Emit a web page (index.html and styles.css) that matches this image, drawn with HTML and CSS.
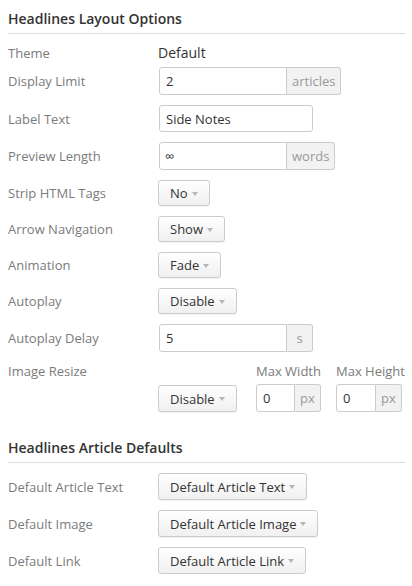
FILE: index.html
```html
<!DOCTYPE html>
<html>
<head>
<meta charset="utf-8">
<link rel="stylesheet" href="styles.css">
</head>
<body>
<div class="page">
  <h2 class="section-title">Headlines Layout Options</h2>
  <div class="form">
    <div class="row row-text">
      <div class="label">Theme</div>
      <div class="value">Default</div>
    </div>
    <div class="row">
      <div class="label">Display Limit</div>
      <div class="input-group"><span class="field w128">2</span><span class="addon">articles</span></div>
    </div>
    <div class="row">
      <div class="label">Label Text</div>
      <div class="field single w154">Side Notes</div>
    </div>
    <div class="row">
      <div class="label">Preview Length</div>
      <div class="input-group"><span class="field w128 inf">∞</span><span class="addon">words</span></div>
    </div>
    <div class="row">
      <div class="label">Strip HTML Tags</div>
      <div class="btn">No<span class="caret"></span></div>
    </div>
    <div class="row">
      <div class="label">Arrow Navigation</div>
      <div class="btn">Show<span class="caret"></span></div>
    </div>
    <div class="row">
      <div class="label">Animation</div>
      <div class="btn">Fade<span class="caret"></span></div>
    </div>
    <div class="row">
      <div class="label">Autoplay</div>
      <div class="btn">Disable<span class="caret"></span></div>
    </div>
    <div class="row">
      <div class="label">Autoplay Delay</div>
      <div class="input-group"><span class="field w128">5</span><span class="addon addon-s">s</span></div>
    </div>
    <div class="row row-resize">
      <div class="label">Image Resize</div>
      <div class="resize">
        <div class="resize-col resize-btn">
          <div class="btn btn-tall">Disable<span class="caret"></span></div>
        </div>
        <div class="resize-col col-w">
          <div class="sublabel">Max Width</div>
          <div class="input-group tall"><span class="field w39">0</span><span class="addon addon-px">px</span></div>
        </div>
        <div class="resize-col col-h">
          <div class="sublabel">Max Height</div>
          <div class="input-group tall"><span class="field w40">0</span><span class="addon addon-px">px</span></div>
        </div>
      </div>
    </div>
  </div>

  <h2 class="section-title second">Headlines Article Defaults</h2>
  <div class="form form2">
    <div class="row">
      <div class="label">Default Article Text</div>
      <div class="btn btn-tall">Default Article Text<span class="caret"></span></div>
    </div>
    <div class="row">
      <div class="label">Default Image</div>
      <div class="btn btn-tall">Default Article Image<span class="caret"></span></div>
    </div>
    <div class="row">
      <div class="label">Default Link</div>
      <div class="btn btn-tall">Default Article Link<span class="caret"></span></div>
    </div>
  </div>
</div>
</body>
</html>
```
FILE: styles.css
```css
* { box-sizing: border-box; }
html, body { margin: 0; padding: 0; background: #fff; }
body {
  font-family: "Open Sans", "Liberation Sans", sans-serif;
  color: #333;
  width: 412px;
}
.page { padding: 0 7px 0 8px; }
.section-title {
  margin: 9px 0 0;
  font-size: 14px;
  font-weight: 600;
  line-height: 20px;
  color: #333;
  padding-bottom: 4px;
  border-bottom: 1px solid #ddd;
}
.section-title.second { margin-top: 26px; }
.form {
  display: flex;
  flex-direction: column;
  gap: 10px;
  padding-top: 9px;
}
.form2 { padding-top: 10px; }
.row {
  display: flex;
  align-items: center;
}
.row-text { height: 20px; margin-bottom: -6px; }
.label {
  width: 150px;
  flex: 0 0 150px;
  font-size: 13px;
  color: #7b7b7b;
  line-height: 18px;
}
.value {
  font-size: 14px;
  color: #333;
  line-height: 20px;
}
.input-group {
  display: flex;
  height: 28px;
  margin-left: 1px;
}
.field {
  display: flex;
  align-items: center;
  border: 1px solid #ccc;
  border-radius: 3px 0 0 3px;
  padding: 0 6px;
  font-size: 13px;
  color: #333;
  background: #fff;
  height: 100%;
}
.field.single {
  height: 27px;
  border-radius: 3px;
  margin-left: 1px;
}
.field.inf { font-size: 13px; padding-left: 5px; }
.w128 { width: 128px; }
.w154 { width: 154px; }
.w39 { width: 39px; }
.w40 { width: 40px; }
.addon {
  display: flex;
  align-items: center;
  justify-content: center;
  padding: 0 5px;
  border: 1px solid #ccc;
  border-left: none;
  border-radius: 0 3px 3px 0;
  background: #f2f2f2;
  color: #999;
  font-size: 13px;
  height: 100%;
}
.addon-s { width: 26px; }
.addon-px { width: 26px; padding: 0; }
.btn {
  display: inline-flex;
  align-items: center;
  height: 26px;
  padding: 0 11px 0 11px;
  border: 1px solid #ccc;
  border-radius: 3px;
  background: linear-gradient(#fff, #f0f0f0);
  box-shadow: 0 1px 1px rgba(0,0,0,0.06);
  font-size: 13px;
  color: #333;
  white-space: nowrap;
}
.btn-tall { height: 27px; }
.caret {
  display: inline-block;
  width: 0;
  height: 0;
  margin-left: 4px;
  margin-top: 1px;
  border-left: 3.5px solid transparent;
  border-right: 3.5px solid transparent;
  border-top: 4px solid #b5b5b5;
}
.row-resize { align-items: flex-start; }
.resize {
  display: flex;
  align-items: flex-end;
  height: 50px;
}
.resize-col {
  display: flex;
  flex-direction: column;
  align-items: flex-start;
}
.resize-btn { width: 98px; }
.col-w { width: 80px; }
.col-h { width: 68px; }
.sublabel {
  font-size: 13px;
  color: #7b7b7b;
  line-height: 18px;
  margin-bottom: 4px;
  white-space: nowrap;
}
.input-group.tall { margin-left: 0; }
```
